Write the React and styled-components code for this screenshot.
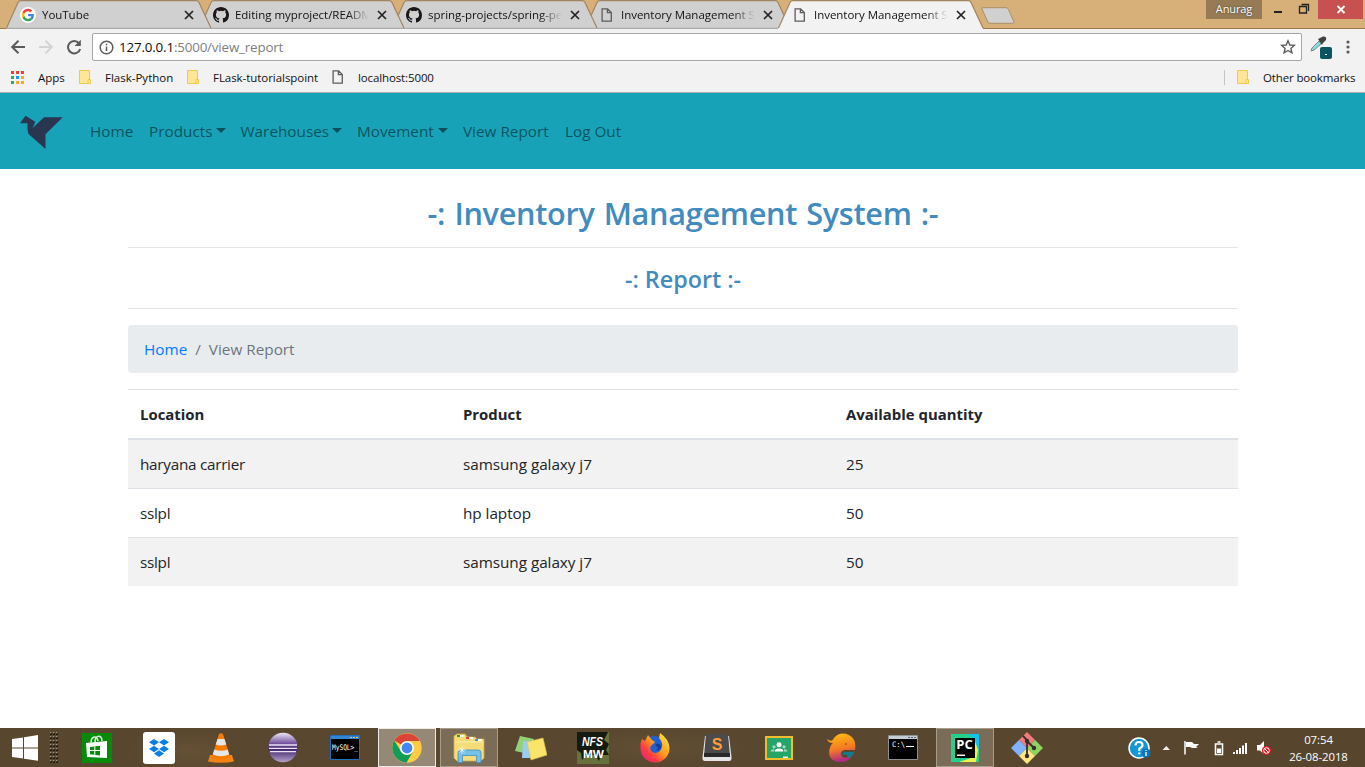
import React from "react";
import styled, { createGlobalStyle } from "styled-components";

const Global = createGlobalStyle`
  * { box-sizing: border-box; }
  body { margin: 0; overflow: hidden; background: #fff; font-family: "Open Sans", "Noto Sans", sans-serif; }
  svg { display: block; flex: none; }
`;

const Screen = styled.div`
  width: 1365px;
  height: 767px;
  display: flex;
  flex-direction: column;
  overflow: hidden;
`;

/* ---------- browser chrome ---------- */

const TitleBar = styled.div`
  height: 29px;
  flex: none;
  display: flex;
  align-items: flex-start;
  background: #d7af78;
  border-bottom: 1px solid #9b774b;
  padding-left: 6px;
`;
const Tab = styled.div`
  display: grid;
  width: 206px;
  height: 29px;
  margin-right: -13px;
  flex: none;
  position: relative;
  z-index: ${(p) => p.$z};
  > * { grid-area: 1 / 1; }
`;
const TabContent = styled.div`
  display: flex;
  align-items: center;
  height: 30px;
  padding-left: 14px;
`;
const TabTitle = styled.div`
  width: 135px;
  margin-left: 6px;
  margin-right: 7px;
  overflow: hidden;
  white-space: nowrap;
  font-size: 11.5px;
  line-height: 18px;
  letter-spacing: -0.03px;
  color: #111;
  mask-image: linear-gradient(90deg, #000 112px, transparent 134px);
`;
const NewTab = styled.div`
  margin: 7px 0 0 10px;
`;
const WindowControls = styled.div`
  margin-left: auto;
  margin-right: 2px;
  display: flex;
  align-items: flex-start;
`;
const Profile = styled.div`
  width: 56px;
  height: 19px;
  background: #967b54;
  color: #fff;
  font-size: 11px;
  letter-spacing: -0.1px;
  line-height: 18px;
  text-align: center;
  text-shadow: 0 0 2px #333;
`;
const Toolbar = styled.div`
  height: 36px;
  flex: none;
  display: flex;
  align-items: center;
  background: #f2f2f2;
  padding: 0 9px 0 10px;
`;
const NavIcons = styled.div`
  display: flex;
  gap: 12px;
`;
const Address = styled.div`
  width: 1210px;
  height: 28px;
  margin-left: 10px;
  display: flex;
  align-items: center;
  background: #fff;
  border: 1px solid #a6a6a6;
  border-radius: 2px;
  padding: 0 5px 0 6px;
`;
const Url = styled.div`
  flex: 1;
  margin-left: 5px;
  font-size: 13.4px;
  color: #111;
  letter-spacing: -0.18px;
  span { color: #808080; }
`;
const ToolIcons = styled.div`
  display: flex;
  margin-left: 8px;
  gap: 14px;
  align-items: center;
`;
const Bookmarks = styled.div`
  height: 28px;
  flex: none;
  display: flex;
  align-items: center;
  background: #f2f2f2;
  border-bottom: 1px solid #b0aeae;
  padding: 0 0 3px 10px;
`;
const Bookmark = styled.div`
  display: flex;
  align-items: center;
  gap: ${(p) => p.$gap || 13}px;
  width: ${(p) => p.$width}px;
  font-size: 11.5px;
  letter-spacing: ${(p) => p.$track || 0}px;
  white-space: nowrap;
  color: #111;
`;
const OtherBookmarks = styled(Bookmark)`
  margin-left: auto;
  border-left: 1px solid #c4c4c4;
  padding-left: 11px;
`;

/* ---------- page ---------- */

const Navbar = styled.nav`
  height: 76px;
  flex: none;
  display: flex;
  align-items: center;
  background: #17a2b8;
  padding: 0 0 3px 16px;
`;
const Menu = styled.div`
  display: flex;
  margin: 3px 0 0 12px;
`;
const MenuItem = styled.a`
  display: flex;
  align-items: center;
  width: ${(p) => p.$width}px;
  padding: 0 8px;
  font-size: 15.3px;
  line-height: 24px;
  white-space: nowrap;
  color: rgba(0, 0, 0, 0.5);
  &::after {
    content: "";
    display: ${(p) => (p.$caret ? "block" : "none")};
    margin: 0 -1px 2px auto;
    border: 5px solid transparent;
    border-top-color: currentColor;
    border-bottom: 0;
  }
`;
const Main = styled.main`
  width: 1110px;
  margin: 0 0 0 128px;
  flex: 1;
`;
const Heading = styled.div`
  text-align: center;
  font-weight: 600;
  color: #428bbf;
  border-bottom: 1px solid #e5e5e5;
  height: ${(p) => p.$height}px;
  padding-top: ${(p) => p.$top}px;
  font-size: ${(p) => p.$size}px;
  letter-spacing: ${(p) => p.$track || 0}px;
  word-spacing: ${(p) => p.$words || 0}px;
  line-height: 1.2;
`;
const Breadcrumb = styled.div`
  display: flex;
  gap: 8px;
  height: 48px;
  align-items: center;
  margin: 16px 0;
  padding: 0 16px;
  border-radius: 4px;
  background: #e9ecef;
  color: #6c757d;
  font-size: 15.3px;
  a { color: #007bff; }
`;
const Row = styled.div`
  display: grid;
  grid-template-columns: 323px 383px 1fr;
  align-items: center;
  height: ${(p) => p.$height}px;
  background: ${(p) => (p.$striped ? "#f2f2f2" : "#fff")};
  border-top: ${(p) => (p.$first ? 0 : 1)}px solid #dee2e6;
  color: #212529;
  font-size: 15.3px;
`;
const Cell = styled.span`
  padding-left: 12px;
  letter-spacing: ${(p) => p.$track || 0}px;
`;
const HeadRow = styled(Row)`
  font-weight: 700;
  font-size: 14.9px;
  border-bottom: 2px solid #dee2e6;
`;

/* ---------- taskbar ---------- */

const Taskbar = styled.footer`
  height: 39px;
  flex: none;
  display: flex;
  align-items: center;
  color: #fff;
  background: radial-gradient(ellipse at 60% 60%, #78613f66, transparent 70%) 130px 0 / 100px 39px no-repeat,
    radial-gradient(ellipse at center, #7a654344, transparent 70%) 560px 0 / 190px 39px no-repeat,
    linear-gradient(90deg, #58462e, #59472f 50%, #57452e);
`;
const Start = styled.div`
  width: 68px;
  display: flex;
  align-items: center;
  gap: 12px;
  padding-left: 12px;
`;
const TaskButton = styled.div`
  width: 58px;
  height: 39px;
  margin-right: 4px;
  display: flex;
  align-items: center;
  justify-content: center;
  background: ${(p) => (p.$active ? "#958877" : p.$open ? "#7b6c57" : "transparent")};
  border: 1px solid ${(p) => (p.$active ? "#eeeae4" : p.$open ? "#a79d8d" : "transparent")};
`;
const Tray = styled.div`
  margin-left: auto;
  display: flex;
  align-items: center;
`;
const Clock = styled.div`
  width: 93px;
  text-align: center;
  font-size: 11.4px;
  letter-spacing: -0.08px;
  line-height: 17px;
  padding-top: 1px;
`;

/* ---------- drawings ---------- */

const TabShape = ({ active }) => (
  <svg width="206" height="29" viewBox="0 0 206 29">
    <path d="M0 28.5 12 2.5Q13 .7 15 .7H190Q192 .7 193 2.5L205 28.5V29H0Z" fill={active ? "#f2f2f2" : "#d0d0d0"} />
    <path d="M.5 28 12 2.5Q13 .7 15 .7H190Q192 .7 193 2.5L205 28" fill="none" stroke="#a18560" strokeWidth="1.2" />
    {!active && <path d="M0 28.3H205" stroke="#a0a0a0" />}
  </svg>
);
const GoogleIcon = () => (
  <svg width="16" height="16" viewBox="0 0 48 48">
    <circle cx="24" cy="24" r="24" fill="#fff" />
    <g transform="translate(5.5 5.5) scale(.77)">
      <path fill="#EA4335" d="M24 9.5c3.54 0 6.71 1.22 9.21 3.6l6.85-6.85C35.9 2.38 30.47 0 24 0 14.62 0 6.51 5.38 2.56 13.22l7.98 6.19C12.43 13.72 17.74 9.5 24 9.5z" />
      <path fill="#4285F4" d="M46.98 24.55c0-1.57-.15-3.09-.38-4.55H24v9.02h12.94c-.58 2.96-2.26 5.48-4.78 7.18l7.73 6c4.51-4.18 7.09-10.36 7.09-17.65z" />
      <path fill="#FBBC05" d="M10.53 28.59A14.5 14.5 0 0 1 9.77 24c0-1.6.27-3.14.76-4.59l-7.98-6.19A24 24 0 0 0 0 24c0 3.88.92 7.54 2.56 10.78z" />
      <path fill="#34A853" d="M24 48c6.48 0 11.93-2.13 15.89-5.81l-7.73-6c-2.15 1.45-4.92 2.3-8.16 2.3-6.26 0-11.57-4.22-13.47-9.91l-7.98 6.19C6.51 42.62 14.62 48 24 48z" />
    </g>
  </svg>
);
const GithubIcon = () => (
  <svg width="16" height="16" viewBox="0 0 16 16" fill="#191717">
    <path d="M8 0C3.58 0 0 3.58 0 8c0 3.54 2.29 6.53 5.47 7.59.4.07.55-.17.55-.38v-1.49c-2.01.37-2.53-.49-2.69-.94-.09-.23-.48-.94-.82-1.13-.28-.15-.68-.52-.01-.53.63-.01 1.08.58 1.23.82.72 1.21 1.87.87 2.33.66.07-.52.28-.87.51-1.07-1.78-.2-3.64-.89-3.64-3.95 0-.87.31-1.59.82-2.15-.08-.2-.36-1.02.08-2.12 0 0 .67-.21 2.2.82a7.6 7.6 0 0 1 4 0c1.53-1.04 2.2-.82 2.2-.82.44 1.1.16 1.92.08 2.12.51.56.82 1.27.82 2.15 0 3.07-1.87 3.75-3.65 3.95.29.25.54.73.54 1.48v2.2c0 .21.15.46.55.38A8 8 0 0 0 16 8c0-4.42-3.58-8-8-8z" />
  </svg>
);
const PageIcon = () => (
  <svg width="16" height="16" viewBox="0 0 16 16" fill="none" stroke="#5c5c5c" strokeWidth="1.3">
    <path d="M3.1 1.8H8.6L12.3 5.5V14.2H3.1ZM8.4 1.8V5.7H12.3" />
  </svg>
);
const CloseIcon = () => (
  <svg width="10" height="10" viewBox="0 0 10 10" stroke="#222" strokeWidth="1.7">
    <path d="M1 1 9 9M9 1 1 9" />
  </svg>
);
const FolderIcon = () => (
  <svg width="14" height="15" viewBox="0 0 14 15">
    <path d="M1.5.5H11.5V13.5H1.5Z" fill="#ffe694" stroke="#ecca52" />
    <path d="M10 9.5H12.5V13.5H10Z" fill="#ffe694" stroke="#ecca52" />
  </svg>
);
const AppsIcon = () => (
  <svg width="14" height="14" viewBox="0 0 14 14">
    {["#ea4335", "#ea4335", "#ea4335", "#34a853", "#2196f3", "#f9a825", "#34a853", "#f9a825", "#f9a825"].map((c, i) => (
      <rect key={i} x={1 + (i % 3) * 5} y={1 + Math.floor(i / 3) * 5} width="3" height="3" fill={c} />
    ))}
  </svg>
);
const BirdLogo = () => (
  <svg width="54" height="48" viewBox="0 0 54 48" fill="#2a3550">
    <path d="M4 17.2 9.5 9.7 19.2 15.7 17.3 21.5 28 11.2H46.7L29.5 28.2V43L12.5 28Q11.3 25 11.5 17.3Z" />
    <path d="M19 16.5 17 22" stroke="#17768f" strokeWidth=".7" />
  </svg>
);

const icons = {
  store: (
    <svg width="30" height="30" viewBox="0 0 30 30">
      <path d="M0 0H30V30H0Z" fill="#058b08" />
      <path d="M4 10 25 8V25L5 24Z" fill="#fff" />
      <path d="M9 10C9 3 15 2 16 8M13 9C13 2 20 1 20 8" fill="none" stroke="#d8edd5" strokeWidth="1.6" />
      <path d="M8 14 12.3 13.4V17H8ZM13.3 13.3 18 12.7V17H13.3ZM8 18H12.3V21.8L8 21.3ZM13.3 18H18V22.5L13.3 22Z" fill="#058b08" />
    </svg>
  ),
  dropbox: (
    <svg width="32" height="32" viewBox="0 0 32 32">
      <rect width="32" height="32" rx="3" fill="#fff" />
      <path d="M11 7 16 10.2 11 13.5 6 10.2ZM21 7 26 10.2 21 13.5 16 10.2ZM11 13.7 16 17 11 20.2 6 17ZM21 13.7 26 17 21 20.2 16 17ZM11 21.5 16 18.2 21 21.5 16 25Z" fill="#087ee8" />
    </svg>
  ),
  vlc: (
    <svg width="28" height="30" viewBox="0 0 28 30">
      <path d="M3 22H25L27 28.5Q14 31 1 28.5Z" fill="#f28414" />
      <path d="M12 1Q14-.5 16 1L23 24Q14 29 5 24Z" fill="#f57c00" />
      <path d="M10.5 6H17.5L19.2 11.5Q14 13.5 8.8 11.5ZM7.3 16.5Q14 19 20.7 16.5L22.2 21.5Q14 25 5.8 21.5Z" fill="#e6e6e6" />
    </svg>
  ),
  eclipse: (
    <svg width="30" height="31" viewBox="0 0 30 31">
      <defs>
        <linearGradient id="ecl" x2="0" y2="1">
          <stop stopColor="#eee7f5" /><stop offset=".38" stopColor="#6d4b99" /><stop offset=".55" stopColor="#3e2466" /><stop offset="1" stopColor="#b5a2cf" />
        </linearGradient>
      </defs>
      <circle cx="15" cy="15.5" r="14.7" fill="url(#ecl)" />
      <path d="M1 13H29M1 16.3H29M2 19.6H28" stroke="#ece4f5" strokeWidth="1.3" />
    </svg>
  ),
  chrome: (
    <svg width="30" height="30" viewBox="0 0 30 30">
      <circle cx="15" cy="15" r="14.7" fill="#fc4" />
      <path d="M15 15 2.3 7.6A14.7 14.7 0 0 1 27.8 8H15Z" fill="#db4437" />
      <path d="M2.3 7.6A14.7 14.7 0 0 0 14.5 29.7L21 18.6 9 18.5Z" fill="#0f9d58" />
      <circle cx="15" cy="15" r="7" fill="#fff" />
      <circle cx="15" cy="15" r="5.4" fill="#4487f4" />
    </svg>
  ),
  explorer: (
    <svg width="32" height="30" viewBox="0 0 32 30">
      <path d="M1 3 4 1H12L14 4H22L24 6H31V25L28 28H4L1 25Z" fill="#f5dc78" stroke="#d2ac44" strokeWidth=".8" />
      <path d="M4 2H11V4H4ZM13 4H20V6H13ZM22 6H29V8H22Z" fill="#fff" />
      <path d="M4 2H7V4H4Z" fill="#24a524" /><path d="M13 4H16V6H13Z" fill="#d84a31" /><path d="M22 6H25V8H22Z" fill="#359ed4" />
      <path d="M2 9H30" stroke="#fff4b4" />
      <path d="M5 29.5V20Q5 17 8 17H25Q28 17 28 20V29.5H23.5V22.5H9.5V29.5Z" fill="#75c1e8" stroke="#3f91bf" strokeWidth=".8" />
      <path d="M9 13V21M5 17H13M6.5 14.5 11.5 19.5M11.5 14.5 6.5 19.5" stroke="#ffffffcc" strokeWidth=".8" />
    </svg>
  ),
  notes: (
    <svg width="32" height="26" viewBox="0 0 32 26">
      <path d="M5 1 19 4 14 19 0 16Z" fill="#92d276" /><path d="M8 6H22V23H7Z" fill="#9bccf1" />
      <path d="M12 7 28 3 32 20 16 25Z" fill="#fbe36c" stroke="#dcc24a" strokeWidth=".6" />
    </svg>
  ),
  firefox: (
    <svg width="30" height="30" viewBox="0 0 30 30">
      <defs><linearGradient id="ff" x1="1" x2="0" y2="1"><stop stopColor="#fff44a" /><stop offset=".45" stopColor="#ff9a1d" /><stop offset=".7" stopColor="#ff3a45" /><stop offset="1" stopColor="#e1188b" /></linearGradient></defs>
      <circle cx="14" cy="14" r="11" fill="#225fd2" />
      <path d="M2 6 5 8 8 2 12 7 15 9 12 12Q9 14 11 18Q15 22 20 18Q25 11 19 5L20 0Q29 6 29.5 15A14.5 14.5 0 0 1 .8 18Q-.5 11 2 6Z" fill="url(#ff)" />
      <path d="M15 12Q19 9 21 13 21 18 16 17 20 15 15 12Z" fill="#153e91" />
    </svg>
  ),
  classroom: (
    <svg width="28" height="24" viewBox="0 0 28 24">
      <path d="M1 1H27V23H1Z" fill="#25a567" stroke="#f0bb2d" strokeWidth="2" />
      <circle cx="14" cy="8.7" r="2.5" fill="#fff" /><circle cx="9" cy="10.8" r="1.6" fill="#a9dac0" /><circle cx="19" cy="10.8" r="1.6" fill="#a9dac0" />
      <path d="M9.5 15.5Q10 12.5 14 12.5T18.5 15.5Z" fill="#fff" /><path d="M5.5 15.5Q6 13 9 13.2V15.5ZM19 13.2Q22 13 22.5 15.5H19Z" fill="#a9dac0" /><path d="M18 20.5H23V22H18Z" fill="#eee" />
    </svg>
  ),
  whale: (
    <svg width="30" height="30" viewBox="0 0 30 30">
      <defs><linearGradient id="wh" x2=".2" y2="1"><stop stopColor="#ffc20c" /><stop offset=".6" stopColor="#f57924" /><stop offset="1" stopColor="#b32a83" /></linearGradient></defs>
      <path d="M1 6Q6 10 8 5 14-2 23 2 31 6 29 17H19Q14 18 15 22 17 26 22 24L26 22Q23 30 13 29 3 28 3 19Q4 12 7 10 2 10 1 6Z" fill="url(#wh)" />
      <path d="M14 21 19 19 28 19Q27 24 22 25L21 22Z" fill="#137c91" /><circle cx="20" cy="11" r=".8" fill="#5e3b20" />
    </svg>
  ),
  git: (
    <svg width="32" height="32" viewBox="0 0 32 32">
      <path d="M16 0 24 8 16 16 8 8Z" fill="#ef7b7b" /><path d="M8 8 16 16 8 24 0 16Z" fill="#80b3ff" /><path d="M24 8 32 16 24 24 16 16Z" fill="#8dd35f" /><path d="M16 16 24 24 16 32 8 24Z" fill="#ffe680" />
      <path d="M12 4 16 8V25M16 9 23 16" stroke="#382b28" strokeWidth="1.8" fill="none" /><circle cx="16" cy="9" r="2.2" fill="#382b28" /><circle cx="23" cy="16" r="2.2" fill="#382b28" /><circle cx="16" cy="24" r="2.2" fill="#382b28" />
    </svg>
  ),
};

const ConsoleIcon = ({ blue, label }) => (
  <svg width="30" height="25" viewBox="0 0 30 25">
    <path d="M.5.5H29.5V24.5H.5Z" fill="#000" stroke={blue ? "#1d6ebd" : "#8d9094"} />
    <path d="M1 1H29V4H1Z" fill={blue ? "#3186d1" : "#c3cbd5"} />
    <path d="M20 2.5H28" stroke={blue ? "#ecb273" : "#666"} strokeDasharray="2 1" />
    <text
      x={blue ? 2 : 4}
      y={blue ? 14.5 : 12}
      fill="#fff"
      fontFamily="DejaVu Sans Mono"
      fontSize={blue ? 7.6 : 7.5}
      textLength={blue ? 26 : 13}
      lengthAdjust="spacingAndGlyphs"
    >
      {label}
    </text>
    {!blue && <path d="M18 11.5H26" stroke="#fff" />}
  </svg>
);
const NfsIcon = () => (
  <svg width="32" height="32" viewBox="0 0 32 32">
    <path d="M0 0H32V32H0Z" fill="#66713c" /><path d="M0 0H31L27 8 32 12 29 18 32 23H24L22 29 18 23H9L5 28 4 21 0 18Z" fill="#151b10" />
    <text x="5" y="14" fill="#fff" fontFamily="Liberation Sans" fontSize="12" fontStyle="italic" fontWeight="700" textLength="21" lengthAdjust="spacingAndGlyphs">NFS</text>
    <text x="6" y="25.5" fill="#fff" fontFamily="Liberation Sans" fontSize="11.5" fontWeight="700" textLength="21" lengthAdjust="spacingAndGlyphs">MW</text>
  </svg>
);
const SublimeIcon = () => (
  <svg width="30" height="28" viewBox="0 0 30 28">
    <path d="M3 2H27L29.5 23Q30 27 27 27H3Q0 27 .5 23Z" fill="#e4e4e4" /><path d="M4 0H26L28 22H2Z" fill="#4b4b4b" /><path d="M2 19H28V23H2Z" fill="#292929" />
    <text x="15" y="16" textAnchor="middle" fill="#ff9d37" fontFamily="Liberation Sans" fontSize="16" fontWeight="700">S</text>
  </svg>
);
const PycharmIcon = () => (
  <svg width="28" height="28" viewBox="0 0 28 28">
    <path d="M0 0H28V28H0Z" fill="#22d18f" /><path d="M17 0H28V16L22 4Z" fill="#12c4ec" /><path d="M23 4 27 16 25 28H8L23 23Z" fill="#eef249" />
    <path d="M4 4H24V24H4Z" fill="#050505" />
    <text x="5.3" y="15" fill="#fff" fontFamily="Open Sans" fontSize="12" fontWeight="700" textLength="16.5" lengthAdjust="spacingAndGlyphs">PC</text><path d="M6 20.5H14V22H6Z" fill="#fff" />
  </svg>
);
const StartIcon = () => (
  <svg width="26" height="26" viewBox="0 0 26 26" fill="#fff">
    <path d="M0 4 11 2.4V12.4H0ZM12 2.2 26 0V12.4H12ZM0 13.4H11V23.5L0 21.9ZM12 13.4H26V25.8L12 23.7Z" />
  </svg>
);
const GripIcon = () => (
  <svg width="9" height="32" viewBox="0 0 9 32">
    {Array.from({ length: 24 }, (_, i) => (
      <g key={i}>
        <rect x={(i % 3) * 3} y={1 + Math.floor(i / 3) * 4} width="2" height="2" fill="#211a12" />
        <rect x={(i % 3) * 3} y={Math.floor(i / 3) * 4} width="1.3" height="1.3" fill="#a39682" />
      </g>
    ))}
  </svg>
);
const TrayIcons = () => (
  <svg width="144" height="24" viewBox="0 0 144 24">
    <circle cx="11" cy="12" r="10" fill="#1298d5" stroke="#fff" strokeWidth="1.5" />
    <path d="M7.5 9.5Q7.5 6 11 6T14.5 9Q14.5 11 11.3 12.7V15M11.3 16.5V18.3" stroke="#fff" strokeWidth="2.2" fill="none" />
    <circle cx="18" cy="17" r="4.5" fill="#0a75b4" /><path d="M18 14V15M18 16V20" stroke="#fff" strokeWidth="1.3" />
    <path d="M34.5 14 38.3 10 42 14Z" fill="#eee" />
    <path d="M57 5V18.5" stroke="#fff" strokeWidth="1.5" /><path d="M58 6H64L66 8H71L68 11 70 12H64L62 11H58Z" fill="#fff" />
    <path d="M87.5 8H94.5V18.5H87.5ZM89.5 6H92.5" stroke="#fff" strokeWidth="1.6" fill="none" /><path d="M89 12.5H93V17H89Z" fill="#fff" />
    <path d="M106 16V18M109 14V18M112 12V18M115 9.5V18M118 7V18" stroke="#fff" strokeWidth="2" />
    <path d="M129 9H132L136 5V18L132 14.5H129Z" fill="#fff" />
    <circle cx="138.5" cy="14.5" r="4.5" fill="#e31b25" /><circle cx="138.5" cy="14.5" r="2.8" fill="none" stroke="#fff" strokeWidth="1" /><path d="M136.5 12.5 140.5 16.5" stroke="#fff" />
  </svg>
);

const tabs = [
  { title: "YouTube", icon: <GoogleIcon /> },
  { title: "Editing myproject/README.md", icon: <GithubIcon /> },
  { title: "spring-projects/spring-petclinic", icon: <GithubIcon /> },
  { title: "Inventory Management System", icon: <PageIcon /> },
  { title: "Inventory Management System", icon: <PageIcon />, active: true },
];
const menu = [
  ["Home", 59], ["Products", 91.5, true], ["Warehouses", 116.5, true], ["Movement", 106, true], ["View Report", 102], ["Log Out", 74],
];
const rows = [
  ["haryana carrier", "samsung galaxy j7", "25"],
  ["sslpl", "hp laptop", "50"],
  ["sslpl", "samsung galaxy j7", "50"],
];
const tasks = [
  { icon: icons.store }, { icon: icons.dropbox }, { icon: icons.vlc }, { icon: icons.eclipse },
  { icon: <ConsoleIcon blue label="MySQL>_" /> }, { icon: icons.chrome, active: true }, { icon: icons.explorer, open: true },
  { icon: icons.notes }, { icon: <NfsIcon /> }, { icon: icons.firefox }, { icon: <SublimeIcon /> }, { icon: icons.classroom },
  { icon: icons.whale }, { icon: <ConsoleIcon label="C:\" /> }, { icon: <PycharmIcon />, open: true }, { icon: icons.git },
];

export default function App() {
  return (
    <Screen>
      <Global />
      <TitleBar>
        {tabs.map((t, i) => (
          <Tab key={i} $z={t.active ? 10 : 6 - i}>
            <TabShape active={t.active} />
            <TabContent>
              {t.icon}
              <TabTitle>{t.title}</TabTitle>
              <CloseIcon />
            </TabContent>
          </Tab>
        ))}
        <NewTab>
          <svg width="34" height="17" viewBox="0 0 34 17">
            <path d="M1.5.7H25Q26.5.7 27.5 2.5L33 15Q33 16.3 31.5 16.3H9Q7.5 16.3 6.8 15L1 2Q.5.7 1.5.7Z" fill="#d0d0d0" stroke="#a98d65" />
          </svg>
        </NewTab>
        <WindowControls>
          <Profile>Anurag</Profile>
          <svg width="56" height="19" viewBox="0 0 56 19" fill="none" stroke="#222">
            <path d="M12 12H20" strokeWidth="2" />
            <path d="M37.5 6.5H44.5V13H37.5ZM39.5 4.5H46.5V11" strokeWidth="1.3" />
          </svg>
          <svg width="45" height="19" viewBox="0 0 45 19">
            <path d="M0 0H45V19H0Z" fill="#c75050" />
            <path d="M19.5 6 26.5 13M26.5 6 19.5 13" stroke="#fff" strokeWidth="1.9" />
          </svg>
        </WindowControls>
      </TitleBar>
      <Toolbar>
        <NavIcons>
          <svg width="16" height="16" viewBox="0 0 16 16" fill="none" stroke="#5a5a5a" strokeWidth="2"><path d="M15 8H2.5M8.5 1.8 2.2 8 8.5 14.2" /></svg>
          <svg width="16" height="16" viewBox="0 0 16 16" fill="none" stroke="#d4d4d4" strokeWidth="2"><path d="M1 8H13.5M7.5 1.8 13.8 8 7.5 14.2" /></svg>
          <svg width="16" height="16" viewBox="0 0 16 16"><path d="M13 4.2A6.2 6.2 0 1 0 14.2 10" fill="none" stroke="#5a5a5a" strokeWidth="2" /><path d="M14.8.8V7H8.6Z" fill="#5a5a5a" /></svg>
        </NavIcons>
        <Address>
          <svg width="15" height="15" viewBox="0 0 15 15" fill="none" stroke="#5a5a5a" strokeWidth="1.5"><circle cx="7.5" cy="7.5" r="6.3" /><path d="M7.5 6.6V11M7.5 3.8V5.3" /></svg>
          <Url>127.0.0.1<span>:5000/view_report</span></Url>
          <svg width="16" height="16" viewBox="0 0 16 16" fill="none" stroke="#5a5a5a" strokeWidth="1.4"><path d="M8 1.8 9.8 6 14.3 6.4 10.9 9.4 11.9 13.8 8 11.5 4.1 13.8 5.1 9.4 1.7 6.4 6.2 6Z" /></svg>
        </Address>
        <ToolIcons>
          <svg width="22" height="24" viewBox="0 0 22 24">
            <path d="M2 13 9 6 11 9 4 15 1 16Z" fill="#8ddbe3" stroke="#76848a" /><path d="M8 4 10 3 13 1.5Q17 1 16 5L13 8 12 10Z" fill="#414141" />
            <rect x="10" y="12" width="12" height="12" rx="2" fill="#0b5560" /><path d="M15 19.5H17" stroke="#fff" />
          </svg>
          <svg width="4" height="14" viewBox="0 0 4 14" fill="#5a5a5a"><circle cx="2" cy="2" r="1.6" /><circle cx="2" cy="7" r="1.6" /><circle cx="2" cy="12" r="1.6" /></svg>
        </ToolIcons>
      </Toolbar>
      <Bookmarks>
        <Bookmark $width={68} $gap={14}><AppsIcon />Apps</Bookmark>
        <Bookmark $width={108}><FolderIcon />Flask-Python</Bookmark>
        <Bookmark $width={144} $track={-0.05}><FolderIcon />FLask-tutorialspoint</Bookmark>
        <Bookmark $width={110} $gap={12} $track={-0.12}><PageIcon />localhost:5000</Bookmark>
        <OtherBookmarks $width={141} $track={-0.14}><FolderIcon />Other bookmarks</OtherBookmarks>
      </Bookmarks>
      <Navbar>
        <BirdLogo />
        <Menu>
          {menu.map(([label, width, caret]) => (
            <MenuItem key={label} $width={width} $caret={caret}>{label}</MenuItem>
          ))}
        </Menu>
      </Navbar>
      <Main>
        <Heading $height={79} $top={26} $size={30.6} $track={-0.27} $words={1.5}>-: Inventory Management System :-</Heading>
        <Heading $height={61} $top={18} $size={23.3}>-: Report :-</Heading>
        <Breadcrumb><a>Home</a><span>/</span><span>View Report</span></Breadcrumb>
        <HeadRow $height={51}><Cell>Location</Cell><Cell>Product</Cell><Cell>Available quantity</Cell></HeadRow>
        {rows.map((r, i) => (
          <Row key={i} $height={i ? 49 : 48} $first={i === 0} $striped={i % 2 === 0}>
            {r.map((c, j) => <Cell key={j} $track={j === 0 ? -0.28 : j === 1 ? -0.05 : 0}>{c}</Cell>)}
          </Row>
        ))}
      </Main>
      <Taskbar>
        <Start><StartIcon /><GripIcon /></Start>
        {tasks.map((t, i) => <TaskButton key={i} $active={t.active} $open={t.open}>{t.icon}</TaskButton>)}
        <Tray>
          <TrayIcons />
          <Clock>07:54<br />26-08-2018</Clock>
        </Tray>
      </Taskbar>
    </Screen>
  );
}
